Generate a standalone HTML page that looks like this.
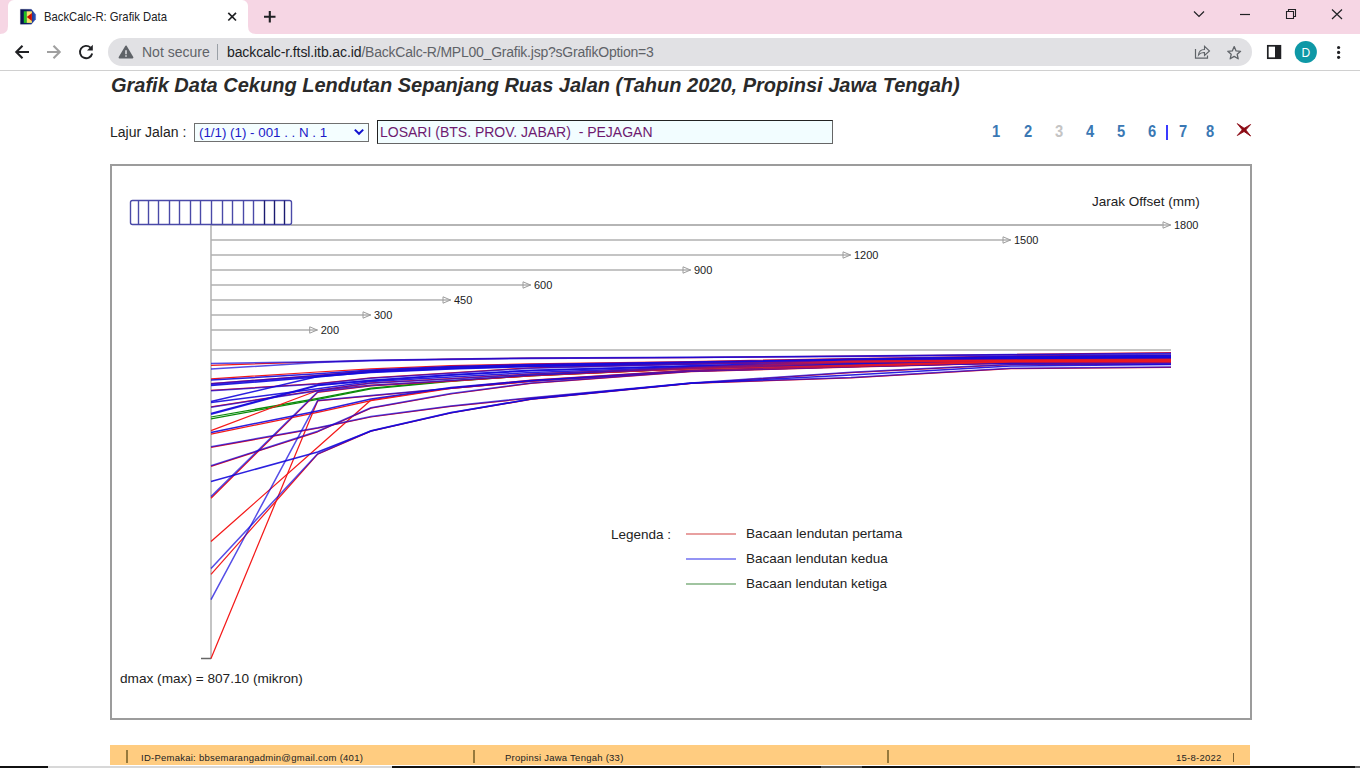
<!DOCTYPE html>
<html lang="id">
<head>
<meta charset="utf-8">
<title>BackCalc-R: Grafik Data</title>
<style>
*{box-sizing:border-box;margin:0;padding:0}
html,body{width:1360px;height:768px;overflow:hidden;background:#fff;font-family:"Liberation Sans",Arial,sans-serif}
.abs{position:absolute}
#tabstrip{left:0;top:0;width:1360px;height:34px;background:#f6d6e4}
#tab{left:8px;top:0;width:240px;height:34px;background:#fff;border-radius:6px 6px 0 0}
#tabtitle{left:44px;top:10px;font-size:12.6px;color:#202124;white-space:nowrap;transform:scaleX(0.896);transform-origin:0 0}
#toolbar{left:0;top:34px;width:1360px;height:36px;background:#fff}
#tbline{left:0;top:70px;width:1360px;height:1px;background:#d0d0d0}
#pill{left:108px;top:38px;width:1144px;height:28px;border-radius:14px;background:#e1e1e4}
#notsecure{left:142px;top:44px;font-size:14px;color:#5f6368;white-space:nowrap}
#urlsep{left:217px;top:44px;width:1px;height:16px;background:#9aa0a6}
#url{left:227px;top:44px;font-size:14px;color:#5f6368;white-space:nowrap}
#url b{font-weight:normal;color:#202124;letter-spacing:-0.1px}
#url span{letter-spacing:-0.23px}
#h1{left:111px;top:74px;font-size:20px;font-weight:bold;font-style:italic;color:#2a2a2a;white-space:nowrap}
#lajur{left:110px;top:124px;font-size:14px;color:#222;white-space:nowrap}
#sel{left:194px;top:123px;width:175px;height:19px;border:1px solid #707070;background:#f4feff;font-size:13.33px;color:#1a1ac8;padding:1px 0 0 4px;white-space:nowrap}
#inp{left:377px;top:120px;width:456px;height:24px;border:1px solid;border-color:#222 #666 #666 #222;background:#f2fdff;font-size:14px;color:#6e1a70;padding:3px 0 0 2px;white-space:pre}
.nav{top:123px;font-size:16px;font-weight:bold;color:#3a78b4;width:20px;text-align:center;white-space:nowrap;transform:scaleX(0.92);margin-left:0.6px}
#frame{left:110px;top:164px;width:1142px;height:556px;border:2px solid #9c9c9c}
#foot{left:110px;top:745px;width:1140px;height:20px;background:#ffcc80}
.ft{top:751.5px;font-size:9.5px;letter-spacing:0.25px;color:#222;white-space:nowrap}
.fsep{top:750px;width:2px;height:13px;background:#97793c}
svg text{font-family:"Liberation Sans",Arial,sans-serif;fill:#222}
</style>
</head>
<body>
<!-- browser chrome -->
<div id="tabstrip" class="abs"></div>
<div id="tab" class="abs"></div>
<svg class="abs" style="left:0;top:0" width="1360" height="72" viewBox="0 0 1360 72">
  <!-- tab curve feet -->
  <path d="M0 34 L8 34 L8 26 Q8 34 0 34Z" fill="#fff"/>
  <path d="M256 34 L248 34 L248 26 Q248 34 256 34Z" fill="#fff"/>
  <!-- favicon -->
  <defs><linearGradient id="fg" x1="0" y1="0" x2="1" y2="0"><stop offset="0" stop-color="#06104c"/><stop offset="0.55" stop-color="#14246e"/><stop offset="1" stop-color="#2f55bd"/></linearGradient></defs>
  <path d="M20.4 9.2 H31.4 L35.7 14.6 V19.2 L31.4 24.3 H20.4Z" fill="url(#fg)" stroke="url(#fg)" stroke-width="0.2" stroke-linejoin="round"/>
  <rect x="23.8" y="11.3" width="2.9" height="11.6" fill="#1fc01f"/>
  <rect x="26.7" y="11.3" width="5.2" height="11.6" fill="#f5e06a"/>
  <path d="M31.9 13 L26.8 17 L31.9 21.1Z" fill="#cc0a00"/>
  <!-- tab close -->
  <path d="M228.3 12.8 L236 20.5 M236 12.8 L228.3 20.5" stroke="#202124" stroke-width="1.7" fill="none"/>
  <!-- new tab plus -->
  <path d="M264 16.8 H275.5 M269.8 11 V22.6" stroke="#202124" stroke-width="2.1" fill="none"/>
  <!-- window controls -->
  <path d="M1194 11.5 L1199 16.5 L1204 11.5" stroke="#202124" stroke-width="1.2" fill="none"/>
  <path d="M1240 14.5 H1250" stroke="#202124" stroke-width="1.2"/>
  <path d="M1286.5 11.5 H1293.5 V18.5 H1286.5Z M1288.5 11.5 V9.5 H1295.5 V16.5 H1293.5" stroke="#202124" stroke-width="1.1" fill="none"/>
  <path d="M1332 9.5 L1342 19 M1342 9.5 L1332 19" stroke="#202124" stroke-width="1.2" fill="none"/>
</svg>
<div id="tabtitle" class="abs">BackCalc-R: Grafik Data</div>
<div id="toolbar" class="abs"></div>
<div id="tbline" class="abs"></div>
<div id="pill" class="abs"></div>
<svg class="abs" style="left:0;top:34px" width="1360" height="36" viewBox="0 34 1360 36">
  <!-- back -->
  <path d="M29 52 H16.5 M22.5 45.8 L16.3 52 L22.5 58.2" stroke="#202124" stroke-width="2.1" fill="none"/>
  <!-- forward -->
  <path d="M47 52 H59.5 M53.5 45.8 L59.7 52 L53.5 58.2" stroke="#a0a0a0" stroke-width="2.1" fill="none"/>
  <!-- reload -->
  <path d="M90.5 47.6 A6.2 6.2 0 1 0 92.2 53.5" stroke="#202124" stroke-width="1.9" fill="none"/>
  <path d="M92.8 44.8 V50.6 H87Z" fill="#202124"/>
  <!-- warning -->
  <path d="M126 46.4 L132.5 57.5 H119.5Z" fill="#5f6368" stroke="#5f6368" stroke-width="1.8" stroke-linejoin="round"/>
  <path d="M126 50.2 V54.2 M126 55.3 V56.8" stroke="#e1e1e4" stroke-width="1.5"/>
  <!-- share -->
  <path d="M1195.5 49 V58.2 H1207.5 V55.5" stroke="#5f6368" stroke-width="1.2" fill="none"/>
  <path d="M1198.5 55 Q1199 49.5 1204.5 49.5 V46.3 L1209.5 51 L1204.5 55.5 V52.5 Q1200.5 52.3 1198.5 55Z" stroke="#5f6368" stroke-width="1.1" fill="none"/>
  <!-- star -->
  <path d="M1234.2 46.6 L1236.1 50.9 L1240.6 51.3 L1237.2 54.3 L1238.2 58.8 L1234.2 56.4 L1230.2 58.8 L1231.2 54.3 L1227.8 51.3 L1232.3 50.9Z" stroke="#5f6368" stroke-width="1.3" fill="none" stroke-linejoin="round"/>
  <!-- side panel -->
  <rect x="1267.8" y="45.8" width="12.6" height="12.4" stroke="#202124" stroke-width="1.7" fill="none"/>
  <rect x="1275" y="45.8" width="5.5" height="12.4" fill="#202124"/>
  <!-- avatar -->
  <circle cx="1305.8" cy="52" r="11.1" fill="#0e98a6"/>
  <!-- menu -->
  <circle cx="1338.6" cy="47.5" r="1.6" fill="#202124"/><circle cx="1338.6" cy="52.4" r="1.6" fill="#202124"/><circle cx="1338.6" cy="57.3" r="1.6" fill="#202124"/>
</svg>
<div class="abs" style="left:1301.5px;top:45.5px;font-size:12px;color:#fff">D</div>
<div id="notsecure" class="abs">Not secure</div>
<div id="urlsep" class="abs"></div>
<div id="url" class="abs"><b>backcalc-r.ftsl.itb.ac.id</b><span>/BackCalc-R/MPL00_Grafik.jsp?sGrafikOption=3</span></div>

<!-- page -->
<div id="h1" class="abs">Grafik Data Cekung Lendutan Sepanjang Ruas Jalan (Tahun 2020, Propinsi Jawa Tengah)</div>
<div id="lajur" class="abs">Lajur Jalan :</div>
<div id="sel" class="abs">(1/1) (1) - 001 . . N . 1</div>
<svg class="abs" style="left:353px;top:127px" width="12" height="10" viewBox="0 0 12 10"><path d="M1.8 2.6 L6 6.8 L10.2 2.6" stroke="#1212d0" stroke-width="2" fill="none"/></svg>
<div id="inp" class="abs">LOSARI (BTS. PROV. JABAR)  - PEJAGAN</div>
<div class="nav abs" style="left:985px">1</div>
<div class="nav abs" style="left:1017px">2</div>
<div class="nav abs" style="left:1048px;color:#c4c4c4">3</div>
<div class="nav abs" style="left:1079px">4</div>
<div class="nav abs" style="left:1110px">5</div>
<div class="nav abs" style="left:1141px">6</div>
<div class="abs" style="left:1166px;top:125px;width:2px;height:15px;background:#3a3aff"></div>
<div class="nav abs" style="left:1172px">7</div>
<div class="nav abs" style="left:1199px">8</div>
<svg class="abs" style="left:1234px;top:120px" width="20" height="20" viewBox="1234 120 20 20"><path d="M1237.3 123.6 L1244.9 128.8 L1250.6 136 L1243 130.8Z M1250.6 124.5 L1244.8 131.1 L1237.3 135.5 L1243.1 128.9Z" fill="#8b0a14" stroke="#8b0a14" stroke-width="0.9" stroke-linejoin="round"/></svg>

<div id="frame" class="abs"></div>
<svg class="abs" style="left:0;top:160px" width="1360" height="570" viewBox="0 160 1360 570">
  <defs><linearGradient id="rg" gradientUnits="userSpaceOnUse" x1="560" y1="0" x2="900" y2="0"><stop offset="0" stop-color="#f41a1a" stop-opacity="0"/><stop offset="1" stop-color="#f41a1a" stop-opacity="0.75"/></linearGradient></defs>
  <!-- offset lines -->
  <g stroke="#b0b0b0" stroke-width="1.5" fill="none">
<line x1="211" y1="330" x2="317.7" y2="330"/>
<polygon points="309.7,326.8 317.2,330 309.7,333.2" fill="none" stroke="#9c9c9c" stroke-width="1"/>
<line x1="211" y1="315" x2="371.0" y2="315"/>
<polygon points="363.0,311.8 370.5,315 363.0,318.2" fill="none" stroke="#9c9c9c" stroke-width="1"/>
<line x1="211" y1="300" x2="451.0" y2="300"/>
<polygon points="443.0,296.8 450.5,300 443.0,303.2" fill="none" stroke="#9c9c9c" stroke-width="1"/>
<line x1="211" y1="285" x2="531.0" y2="285"/>
<polygon points="523.0,281.8 530.5,285 523.0,288.2" fill="none" stroke="#9c9c9c" stroke-width="1"/>
<line x1="211" y1="270" x2="691.0" y2="270"/>
<polygon points="683.0,266.8 690.5,270 683.0,273.2" fill="none" stroke="#9c9c9c" stroke-width="1"/>
<line x1="211" y1="255" x2="851.0" y2="255"/>
<polygon points="843.0,251.8 850.5,255 843.0,258.2" fill="none" stroke="#9c9c9c" stroke-width="1"/>
<line x1="211" y1="240" x2="1011.0" y2="240"/>
<polygon points="1003.0,236.8 1010.5,240 1003.0,243.2" fill="none" stroke="#9c9c9c" stroke-width="1"/>
<line x1="211" y1="225" x2="1171.0" y2="225"/>
<polygon points="1163.0,221.8 1170.5,225 1163.0,228.2" fill="none" stroke="#9c9c9c" stroke-width="1"/>
  <line x1="211" y1="350" x2="1171" y2="350"/>
  <line x1="211" y1="225" x2="211" y2="659"/>
  </g>
  <line x1="291" y1="225" x2="1163" y2="225" stroke="#b0b0b0" stroke-width="1.5"/>
  <line x1="201" y1="658.5" x2="211" y2="658.5" stroke="#666" stroke-width="1.5"/>
  <!-- sensor box -->
  <rect x="130.5" y="200.5" width="161" height="24" rx="2" ry="2" fill="none" stroke="#4a4aa8" stroke-width="1.4"/>
  <g stroke-width="1.4">
<line x1="138.5" y1="200.5" x2="138.5" y2="224.5" stroke="#4a4aa8"/>
<line x1="148.5" y1="200.5" x2="148.5" y2="224.5" stroke="#4a4aa8"/>
<line x1="158.5" y1="200.5" x2="158.5" y2="224.5" stroke="#4a4aa8"/>
<line x1="169.5" y1="200.5" x2="169.5" y2="224.5" stroke="#4a4aa8"/>
<line x1="179.5" y1="200.5" x2="179.5" y2="224.5" stroke="#4a4aa8"/>
<line x1="190.5" y1="200.5" x2="190.5" y2="224.5" stroke="#4a4aa8"/>
<line x1="200.5" y1="200.5" x2="200.5" y2="224.5" stroke="#4a4aa8"/>
<line x1="211.5" y1="200.5" x2="211.5" y2="224.5" stroke="#4a4aa8"/>
<line x1="222.5" y1="200.5" x2="222.5" y2="224.5" stroke="#4a4aa8"/>
<line x1="232.5" y1="200.5" x2="232.5" y2="224.5" stroke="#4a4aa8"/>
<line x1="243.5" y1="200.5" x2="243.5" y2="224.5" stroke="#4a4aa8"/>
<line x1="253.5" y1="200.5" x2="253.5" y2="224.5" stroke="#4a4aa8"/>
<line x1="264.5" y1="200.5" x2="264.5" y2="224.5" stroke="#1a1a70"/>
<line x1="274.5" y1="200.5" x2="274.5" y2="224.5" stroke="#1a1a70"/>
<line x1="284.5" y1="200.5" x2="284.5" y2="224.5" stroke="#1a1a70"/>
  </g>
  <g font-size="11">
<text x="320.7" y="334">200</text>
<text x="374.0" y="319">300</text>
<text x="454.0" y="304">450</text>
<text x="534.0" y="289">600</text>
<text x="694.0" y="274">900</text>
<text x="854.0" y="259">1200</text>
<text x="1014.0" y="244">1500</text>
<text x="1174.0" y="229">1800</text>
  </g>
  <text x="1092" y="206" font-size="13.5">Jarak Offset (mm)</text>
  <!-- deflection lines -->
  <g fill="none" stroke-width="1.5" stroke-linejoin="round">
<polyline points="211.0,417.0 317.7,398.4 371.0,388.2 451.0,380.8 531.0,375.4 691.0,368.3 851.0,364.3 1011.0,361.3 1171.0,360.8" stroke="#0a8a0a" stroke-width="1.25"/>
<polyline points="211.0,418.8 317.7,399.4 371.0,388.8 451.0,381.3 531.0,375.8 691.0,368.7 851.0,364.7 1011.0,361.7 1171.0,361.2" stroke="#0a8a0a" stroke-width="1.25"/>
<polyline points="211.0,365.3 317.7,362.0 371.0,360.5 451.0,359.2 531.0,358.2 691.0,357.5 851.0,356.2 1011.0,354.5 1171.0,352.5" stroke="#f41a1a" stroke-width="1.25"/>
<polyline points="211.0,378.8 317.7,372.0 371.0,368.8 451.0,365.6 531.0,363.8 691.0,361.5 851.0,358.5 1011.0,356.0 1171.0,355.0" stroke="#f41a1a" stroke-width="1.25"/>
<polyline points="211.0,383.6 317.7,375.3 371.0,370.7 451.0,367.1 531.0,365.0 691.0,362.4 851.0,359.4 1011.0,356.8 1171.0,355.8" stroke="#f41a1a" stroke-width="1.25"/>
<polyline points="211.0,390.4 317.7,383.6 371.0,377.8 451.0,372.8 531.0,367.8 691.0,363.8 851.0,361.6 1011.0,360.4 1171.0,359.8" stroke="#f41a1a" stroke-width="1.25"/>
<polyline points="211.0,406.9 317.7,390.3 371.0,382.8 451.0,378.6 531.0,373.9 691.0,367.6 851.0,361.0 1011.0,360.0 1171.0,359.2" stroke="#f41a1a" stroke-width="1.25"/>
<polyline points="211.0,430.6 317.7,390.5 371.0,385.0 451.0,380.9 531.0,375.9 691.0,368.6 851.0,365.2 1011.0,361.2 1171.0,361.0" stroke="#f41a1a" stroke-width="1.25"/>
<polyline points="211.0,434.1 317.7,412.4 371.0,400.6 451.0,388.5 531.0,381.5 691.0,371.0 851.0,366.4 1011.0,362.0 1171.0,362.0" stroke="#f41a1a" stroke-width="1.25"/>
<polyline points="211.0,447.3 317.7,428.2 371.0,417.0 451.0,406.4 531.0,398.1 691.0,383.4 851.0,372.6 1011.0,364.7 1171.0,364.2" stroke="#f41a1a" stroke-width="1.25"/>
<polyline points="211.0,466.3 317.7,431.8 371.0,408.1 451.0,394.0 531.0,383.4 691.0,371.7 851.0,367.2 1011.0,363.2 1171.0,362.7" stroke="#f41a1a" stroke-width="1.25"/>
<polyline points="211.0,498.2 317.7,392.4 371.0,386.0 451.0,381.2 531.0,375.7 691.0,368.6 851.0,362.2 1011.0,360.8 1171.0,360.4" stroke="#f41a1a" stroke-width="1.25"/>
<polyline points="211.0,541.5 317.7,447.3 371.0,400.0 451.0,388.0 531.0,380.2 691.0,370.0 851.0,365.8 1011.0,361.6 1171.0,361.5" stroke="#f41a1a" stroke-width="1.25"/>
<polyline points="211.0,574.3 317.7,454.2 371.0,431.2 451.0,413.0 531.0,399.4 691.0,383.4 851.0,377.9 1011.0,368.7 1171.0,367.3" stroke="#f41a1a" stroke-width="1.25"/>
<polyline points="211.0,658.5 317.7,400.8 371.0,395.8 451.0,388.4 531.0,381.2 691.0,371.2 851.0,366.7 1011.0,363.2 1171.0,362.7" stroke="#f41a1a" stroke-width="1.25"/>
<polyline points="211.0,363.5 317.7,361.8 371.0,360.3 451.0,359.0 531.0,358.0 691.0,357.3 851.0,356.0 1011.0,354.6 1171.0,353.2" stroke="#1408dc" stroke-opacity="0.72"/>
<polyline points="211.0,369.1 317.7,362.5 371.0,360.8 451.0,359.5 531.0,358.4 691.0,357.6 851.0,356.4 1011.0,355.0 1171.0,354.0" stroke="#1408dc" stroke-opacity="0.72"/>
<polyline points="211.0,380.0 317.7,373.8 371.0,370.0 451.0,366.5 531.0,364.5 691.0,362.0 851.0,359.0 1011.0,356.5 1171.0,355.5" stroke="#1408dc" stroke-opacity="0.9"/>
<polyline points="211.0,383.8 317.7,375.5 371.0,370.9 451.0,367.3 531.0,365.2 691.0,362.6 851.0,359.6 1011.0,357.0 1171.0,356.0" stroke="#1408dc" stroke-opacity="0.72"/>
<polyline points="211.0,384.7 317.7,376.2 371.0,371.5 451.0,368.0 531.0,365.8 691.0,363.2 851.0,360.2 1011.0,357.5 1171.0,356.5" stroke="#1408dc" stroke-opacity="0.72"/>
<polyline points="211.0,385.6 317.7,377.0 371.0,372.0 451.0,368.5 531.0,366.2 691.0,363.6 851.0,360.8 1011.0,358.0 1171.0,357.0" stroke="#1408dc" stroke-opacity="0.9"/>
<polyline points="211.0,390.8 317.7,384.0 371.0,378.2 451.0,373.2 531.0,368.2 691.0,364.2 851.0,361.7 1011.0,358.7 1171.0,357.7" stroke="#1408dc" stroke-opacity="0.72"/>
<polyline points="211.0,401.5 317.7,376.5 371.0,372.5 451.0,369.0 531.0,366.6 691.0,364.0 851.0,361.0 1011.0,358.5 1171.0,357.5" stroke="#1408dc" stroke-opacity="0.9"/>
<polyline points="211.0,402.6 317.7,388.7 371.0,381.5 451.0,377.0 531.0,372.6 691.0,366.9 851.0,363.0 1011.0,360.0 1171.0,359.0" stroke="#1408dc" stroke-opacity="0.9"/>
<polyline points="211.0,407.3 317.7,390.7 371.0,383.2 451.0,379.0 531.0,374.3 691.0,368.0 851.0,364.0 1011.0,361.0 1171.0,360.2" stroke="#1408dc" stroke-opacity="0.72"/>
<polyline points="211.0,413.4 317.7,385.0 371.0,380.2 451.0,374.7 531.0,370.2 691.0,365.7 851.0,362.2 1011.0,359.2 1171.0,358.2" stroke="#1408dc" stroke-opacity="0.9"/>
<polyline points="211.0,414.2 317.7,385.6 371.0,380.8 451.0,375.3 531.0,370.8 691.0,366.3 851.0,362.8 1011.0,359.8 1171.0,358.8" stroke="#1408dc" stroke-opacity="0.9"/>
<polyline points="211.0,432.4 317.7,410.9 371.0,399.1 451.0,387.5 531.0,380.5 691.0,370.5 851.0,366.0 1011.0,362.4 1171.0,362.0" stroke="#1408dc" stroke-opacity="0.9"/>
<polyline points="211.0,446.8 317.7,427.7 371.0,416.6 451.0,406.0 531.0,397.7 691.0,383.0 851.0,372.2 1011.0,364.3 1171.0,363.8" stroke="#1408dc" stroke-opacity="0.72"/>
<polyline points="211.0,465.8 317.7,431.3 371.0,407.7 451.0,393.6 531.0,383.0 691.0,371.3 851.0,366.8 1011.0,362.8 1171.0,362.3" stroke="#1408dc" stroke-opacity="0.72"/>
<polyline points="211.0,481.5 317.7,452.0 371.0,431.0 451.0,412.8 531.0,399.0 691.0,383.2 851.0,375.0 1011.0,366.0 1171.0,364.4" stroke="#1408dc" stroke-opacity="0.9"/>
<polyline points="211.0,496.6 317.7,391.8 371.0,385.6 451.0,380.6 531.0,375.3 691.0,368.2 851.0,364.2 1011.0,361.2 1171.0,360.7" stroke="#1408dc" stroke-opacity="0.72"/>
<polyline points="211.0,568.4 317.7,453.8 371.0,430.8 451.0,412.6 531.0,399.0 691.0,383.0 851.0,377.5 1011.0,368.3 1171.0,367.0" stroke="#1408dc" stroke-opacity="0.72"/>
<polyline points="211.0,599.7 317.7,400.6 371.0,395.6 451.0,388.2 531.0,381.0 691.0,371.0 851.0,366.5 1011.0,363.0 1171.0,362.5" stroke="#1408dc" stroke-opacity="0.72"/>
<polyline points="531.0,367.8 691.0,363.8 851.0,361.6 1011.0,360.4 1171.0,359.8" stroke="url(#rg)"/>
<polyline points="531.0,373.9 691.0,367.6 851.0,361.0 1011.0,360.0 1171.0,359.2" stroke="url(#rg)"/>
<polyline points="531.0,375.9 691.0,368.6 851.0,365.2 1011.0,361.2 1171.0,361.0" stroke="url(#rg)"/>
<polyline points="531.0,381.5 691.0,371.0 851.0,366.4 1011.0,362.0 1171.0,362.0" stroke="url(#rg)"/>
<polyline points="531.0,375.7 691.0,368.6 851.0,362.2 1011.0,360.8 1171.0,360.4" stroke="url(#rg)"/>
<polyline points="531.0,380.2 691.0,370.0 851.0,365.8 1011.0,361.6 1171.0,361.5" stroke="url(#rg)"/>
  </g>
  <!-- legend -->
  <text x="611" y="539" font-size="13.5">Legenda :</text>
  <line x1="686" y1="534" x2="736" y2="534" stroke="#e08080" stroke-width="1.4"/>
  <line x1="686" y1="559" x2="736" y2="559" stroke="#7070f0" stroke-width="1.4"/>
  <line x1="686" y1="584" x2="736" y2="584" stroke="#80b080" stroke-width="1.4"/>
  <text x="746" y="538" font-size="13.65">Bacaan lendutan pertama</text>
  <text x="746" y="563" font-size="13.5">Bacaan lendutan kedua</text>
  <text x="746" y="588" font-size="13.5">Bacaan lendutan ketiga</text>
  <text x="120" y="683" font-size="13.63">dmax (max) = 807.10 (mikron)</text>
</svg>

<!-- footer -->
<div id="foot" class="abs"></div>
<div class="fsep abs" style="left:126px"></div>
<div class="ft abs" style="left:141px">ID-Pemakai: bbsemarangadmin@gmail.com (401)</div>
<div class="fsep abs" style="left:473px"></div>
<div class="ft abs" style="left:505px">Propinsi Jawa Tengah (33)</div>
<div class="fsep abs" style="left:887px"></div>
<div class="ft abs" style="left:1176px">15-8-2022</div>
<div class="abs" style="left:1233px;top:753px;width:1px;height:9px;background:#7a6030"></div>
<!-- bottom sliver -->
<div class="abs" style="left:0;top:766px;width:1360px;height:2px;background:#111"></div>
<div class="abs" style="left:48px;top:766px;width:344px;height:2px;background:#d8d8d8"></div>
<div class="abs" style="left:821px;top:766px;width:41px;height:2px;background:#555"></div>
<div class="abs" style="left:1355px;top:766px;width:5px;height:2px;background:#666"></div>
</body>
</html>
